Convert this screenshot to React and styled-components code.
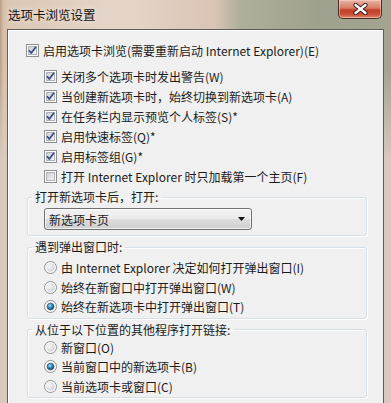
import styled, { createGlobalStyle } from 'styled-components';

const GlobalStyle = createGlobalStyle`
  html, body { margin: 0; padding: 0; background: #cdb8a5; }
  body {
    font-family: "Noto Sans CJK SC", "Noto Sans", sans-serif;
    font-size: 12px;
    color: #1b1b1b;
  }
`;

const Window = styled.div`
  width: 391px;
  height: 403px;
  overflow: hidden;
  display: flex;
  flex-direction: column;
  background:
    linear-gradient(180deg, rgba(216, 200, 188, 0) 0, rgba(216, 200, 188, 0) 70px, rgba(218, 203, 192, 0.95) 160px),
    linear-gradient(90deg, #b99c84 0, #d6bea8 3px, #dcc7b4 8px, #e6d6ca 120px, #dac4b4 215px, #aeae9c 240px, #9ea18d 320px, #a3a592 391px);
`;

const TitleBar = styled.div`
  height: 29px;
  flex: none;
  display: flex;
  justify-content: space-between;
  align-items: flex-start;
  padding-left: 8px;
`;

const Title = styled.span`
  margin-top: 6px;
  font-size: 12.5px;
  line-height: 17px;
  color: #111;
  text-shadow: 0 0 6px rgba(255, 255, 255, 0.8);
`;

const CloseButton = styled.div`
  width: 44px;
  height: 19px;
  margin-right: 9px;
  box-sizing: border-box;
  border: 1px solid #4a2a22;
  border-top: none;
  border-radius: 0 0 5px 5px;
  background: linear-gradient(180deg, #e6b4a6 0, #d77c66 45%, #c23e27 55%, #c9503a 80%, #e08a6c 100%);
  box-shadow: inset 0 0 0 1px rgba(255, 220, 210, 0.5);
  display: flex;
  align-items: center;
  justify-content: center;
`;

const Panel = styled.div`
  flex: 1;
  margin: 0 7px;
  border: 1px solid #5d5d5d;
  border-bottom: none;
  background: #f0f0f0;
  box-shadow: inset 1px 1px 0 #ffffff;
  padding: 10px 0 0 18px;
  display: flex;
  flex-direction: column;
`;

const Row = styled.label`
  display: flex;
  align-items: center;
  gap: 4px;
  flex: none;
  height: ${p => p.$h || 20}px;
  padding-left: ${p => p.$indent || 0}px;
  white-space: nowrap;
`;

const SubList = styled.div`
  display: flex;
  flex-direction: column;
  margin-top: 6px;
`;

const Group = styled.fieldset`
  margin: ${p => p.$top || 0}px 0 0 1px;
  width: 340px;
  box-sizing: border-box;
  border: 1px solid #d5dfe5;
  border-radius: 3px;
  box-shadow: inset 1px 1px 0 #ffffff, 1px 1px 0 #ffffff;
  padding: ${p => p.$pad || 0}px 0 ${p => p.$bottom || 1}px 16px;
  display: flex;
  flex-direction: column;
`;

const Legend = styled.legend`
  margin-left: -12px;
  padding: 0 3px;
  line-height: 16px;
  white-space: nowrap;
`;

const Select = styled.div`
  margin-top: 3px;
  width: 208px;
  height: 22px;
  box-sizing: border-box;
  border: 1px solid #707070;
  border-radius: 3px;
  background: linear-gradient(180deg, #f2f2f2 0, #ebebeb 50%, #dddddd 51%, #cfcfcf 100%);
  box-shadow: inset 0 0 0 1px rgba(255, 255, 255, 0.7);
  display: flex;
  align-items: center;
  justify-content: space-between;
  padding: 0 6px 0 4px;
`;

const BottomLine = styled.div`
  margin-top: 6px;
  padding-left: 12px;
  white-space: nowrap;
`;

function CheckBox({ checked }) {
  return (
    <svg width="13" height="13" viewBox="0 0 13 13">
      <defs>
        <linearGradient id="cbg" x1="0" y1="0" x2="1" y2="1">
          <stop offset="0" stopColor="#cbcfd5" />
          <stop offset="1" stopColor="#f6f6f6" />
        </linearGradient>
      </defs>
      <rect x="0.5" y="0.5" width="12" height="12" fill="#fff" stroke="#8e8f8f" />
      <rect x="2.5" y="2.5" width="8" height="8" fill="url(#cbg)" stroke="#aeb3b9" strokeWidth="1" />
      {checked && (
        <path d="M3 6.2 L5.3 9 L10 2.8" fill="none" stroke="#3b4c87" strokeWidth="1.8" strokeLinejoin="round" />
      )}
    </svg>
  );
}

function Radio({ checked }) {
  return (
    <svg width="13" height="13" viewBox="0 0 13 13">
      <defs>
        <radialGradient id="rbg" cx="0.35" cy="0.35" r="0.8">
          <stop offset="0" stopColor="#f6f6f6" />
          <stop offset="1" stopColor="#c9cdd2" />
        </radialGradient>
        <radialGradient id="rdot" cx="0.4" cy="0.35" r="0.7">
          <stop offset="0" stopColor="#a8e0f8" />
          <stop offset="0.5" stopColor="#2a8cc6" />
          <stop offset="1" stopColor="#0d3b62" />
        </radialGradient>
      </defs>
      <circle cx="6.5" cy="6.5" r="6" fill="#fdfdfd" stroke="#8e8f8f" />
      <circle cx="6.5" cy="6.5" r="4.3" fill="url(#rbg)" />
      {checked && <circle cx="6.5" cy="6.5" r="3.3" fill="url(#rdot)" stroke="#1f3f5c" strokeWidth="0.6" />}
    </svg>
  );
}

const subChecks = [
  ['关闭多个选项卡时发出警告(W)', true],
  ['当创建新选项卡时，始终切换到新选项卡(A)', true],
  ['在任务栏内显示预览个人标签(S)*', true],
  ['启用快速标签(Q)*', true],
  ['启用标签组(G)*', true],
  ['打开 Internet Explorer 时只加载第一个主页(F)', false],
];

const popupOptions = [
  ['由 Internet Explorer 决定如何打开弹出窗口(I)', false],
  ['始终在新窗口中打开弹出窗口(W)', false],
  ['始终在新选项卡中打开弹出窗口(T)', true],
];

const linkOptions = [
  ['新窗口(O)', false],
  ['当前窗口中的新选项卡(B)', true],
  ['当前选项卡或窗口(C)', false],
];

export default function App() {
  return (
    <Window>
      <GlobalStyle />
      <TitleBar>
        <Title>选项卡浏览设置</Title>
        <CloseButton>
          <svg width="15" height="12" viewBox="0 0 15 12">
            <path d="M2.5 2 L12.5 10 M12.5 2 L2.5 10" stroke="#3a1a14" strokeWidth="4.2" strokeLinecap="round" />
            <path d="M2.5 2 L12.5 10 M12.5 2 L2.5 10" stroke="#ffffff" strokeWidth="2.4" strokeLinecap="round" />
          </svg>
        </CloseButton>
      </TitleBar>
      <Panel>
        <Row>
          <CheckBox checked />
          <span>启用选项卡浏览(需要重新启动 Internet Explorer)(E)</span>
        </Row>
        <SubList>
          {subChecks.map(([text, checked], i) => (
            <Row key={text} $indent={18} $h={i === 5 ? 21 : 20}>
              <CheckBox checked={checked} />
              <span>{text}</span>
            </Row>
          ))}
        </SubList>
        <Group $top={2} $bottom={5}>
          <Legend>打开新选项卡后，打开:</Legend>
          <Select>
            <span>新选项卡页</span>
            <svg width="7" height="4" viewBox="0 0 7 4">
              <path d="M0 0 H7 L3.5 4 Z" fill="#111" />
            </svg>
          </Select>
        </Group>
        <Group $top={3} $pad={3} $bottom={1}>
          <Legend>遇到弹出窗口时:</Legend>
          {popupOptions.map(([text, checked]) => (
            <Row key={text} $h={19.5}>
              <Radio checked={checked} />
              <span>{text}</span>
            </Row>
          ))}
        </Group>
        <Group $top={3} $pad={0} $bottom={1}>
          <Legend>从位于以下位置的其他程序打开链接:</Legend>
          {linkOptions.map(([text, checked]) => (
            <Row key={text} $h={19.5}>
              <Radio checked={checked} />
              <span>{text}</span>
            </Row>
          ))}
        </Group>
        <BottomLine>在当前窗口中的新选项卡中打开来自其他程序的链接</BottomLine>
      </Panel>
    </Window>
  );
}
